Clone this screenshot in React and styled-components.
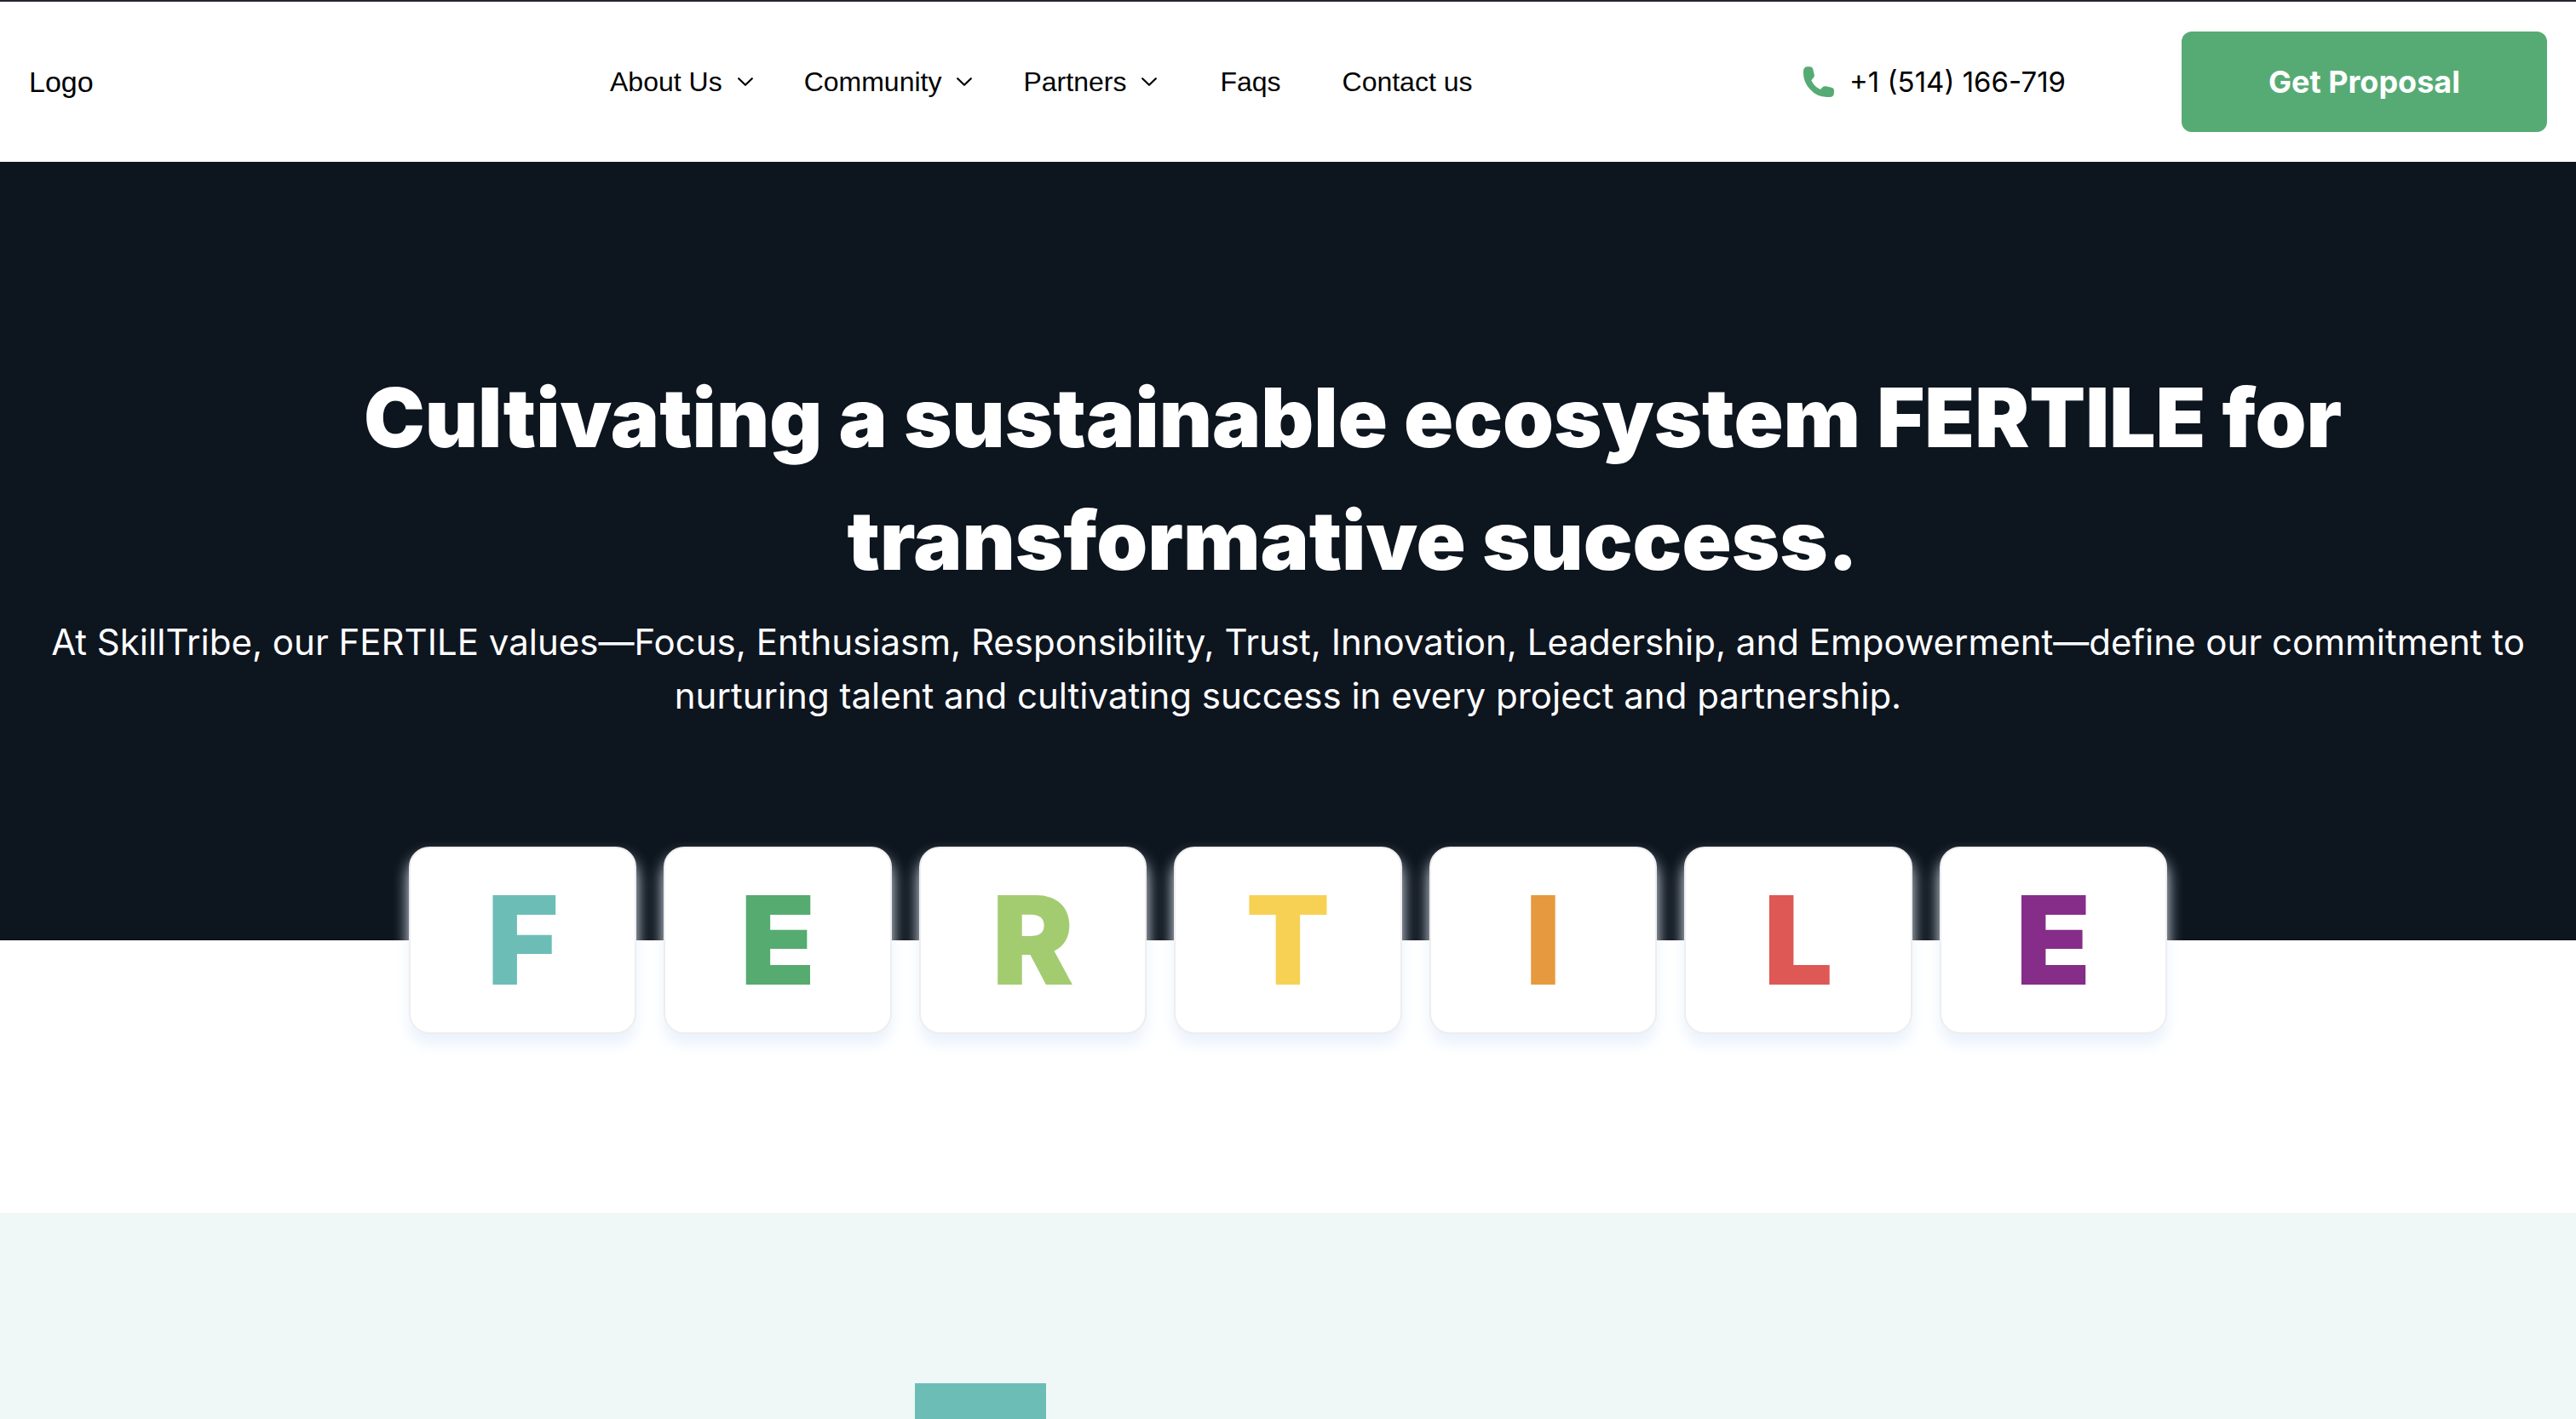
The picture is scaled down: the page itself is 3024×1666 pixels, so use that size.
import React from "react";
import styled, { createGlobalStyle } from "styled-components";

const GlobalStyle = createGlobalStyle`
  *, *::before, *::after { box-sizing: border-box; }
  body {
    margin: 0;
    background: #ffffff;
    font-family: Inter, "Liberation Sans", sans-serif;
    color: #000000;
  }
`;

const Page = styled.div`
  min-height: 100vh;
`;

const Header = styled.header`
  display: grid;
  grid-template-columns: 682px 1fr auto auto;
  align-items: center;
  padding: 35px 34px;
  border-top: 2px solid #22262c;
  background: #ffffff;
`;

const Brand = styled.a`
  font: 400 34px/40px "Liberation Sans", Arial, sans-serif;
  color: #000000;
  text-decoration: none;
`;

const Nav = styled.nav`
  display: flex;
  align-items: center;
  gap: 74px;
`;

const NavGroup = styled.div`
  display: flex;
  align-items: center;
  gap: ${(p) => p.$gap}px;
`;

const NavLink = styled.a`
  font: 400 32px/40px "Liberation Sans", Arial, sans-serif;
  color: #000000;
  text-decoration: none;
`;

const NavButton = styled.button`
  display: flex;
  align-items: center;
  gap: 18px;
  padding: 0;
  border: 0;
  background: none;
  font: 400 32px/40px "Liberation Sans", Arial, sans-serif;
  color: #000000;
`;

const Phone = styled.a`
  display: flex;
  align-items: center;
  gap: 18px;
  margin-right: 136px;
  font-size: 33px;
  line-height: 40px;
  color: #000000;
  text-decoration: none;
`;

const ProposalButton = styled.button`
  padding: 32px 102px;
  border: 0;
  border-radius: 12px;
  background: #56ab74;
  color: #ffffff;
  font: 700 36px/54px Inter, sans-serif;
`;

const Hero = styled.section`
  display: flow-root;
  padding: 228px 40px 0;
  background: #0d151f;
  color: #ffffff;
  text-align: center;
`;

const Title = styled.h1`
  margin: 0;
  padding-left: 152px;
  font-size: 96px;
  line-height: 144px;
  font-weight: 900;
`;

const Lead = styled.p`
  margin: 16px 0 0;
  font-size: 42px;
  line-height: 63px;
`;

const Cards = styled.ul`
  display: grid;
  grid-template-columns: repeat(7, 1fr);
  gap: 32px;
  max-width: 2064px;
  margin: 146px auto -110px;
  padding: 0;
  list-style: none;
`;

const Card = styled.li`
  border: 2px solid #eeeeee;
  border-radius: 24px;
  background: #ffffff;
  box-shadow: 0 12px 18px #eaf2fc;
  color: ${(p) => p.$tone};
  font-size: 144px;
  line-height: 216px;
  font-weight: 900;
`;

const Values = styled.section`
  display: flow-root;
  margin-top: 320px;
  background: #eff8f7;
`;

const ValueTile = styled.div`
  width: 154px;
  height: 42px;
  margin: 200px 0 0 1074px;
  background: #6dbdb7;
`;

const Chevron = () => (
  <svg width="18" height="10" viewBox="0 0 18 10" fill="none" aria-hidden="true">
    <path d="M1.200 1.200l7.800 7.600 7.800-7.600" stroke="#000" strokeWidth="2.2" strokeLinecap="round" strokeLinejoin="round" />
  </svg>
);

const PhoneIcon = () => (
  <svg width="36" height="36" viewBox="0 0 36 36" aria-hidden="true">
    <path
      fill="#56ab74"
      d="M0 6Q0 .2 5 .2H7.500Q10.500.2 11.200 3L12.800 9.500Q13.300 12 11.500 13.800L9.300 16.200Q12.500 23.500 20 27L22.300 24.600Q24 22.800 26.500 23.200L33 24.700Q36 25.400 36 28.300V31Q36 36 30.500 36H28Q15.500 35.700 8 27Q0 18.500 0 8Z"
    />
  </svg>
);

const menus = ["About Us", "Community", "Partners"];
const links = ["Faqs", "Contact us"];
const letters = [
  ["F", "#6dbdb7"],
  ["E", "#56ab70"],
  ["R", "#a3cc70"],
  ["T", "#f7d154"],
  ["I", "#e6993f"],
  ["L", "#de5856"],
  ["E", "#852d88"],
];

export default function App() {
  return (
    <Page>
      <GlobalStyle />
      <Header>
        <Brand href="#">Logo</Brand>
        <Nav>
          <NavGroup $gap={60}>
            {menus.map((name) => (
              <NavButton key={name} type="button">
                {name}
                <Chevron />
              </NavButton>
            ))}
          </NavGroup>
          <NavGroup $gap={72}>
            {links.map((name) => (
              <NavLink key={name} href="#">
                {name}
              </NavLink>
            ))}
          </NavGroup>
        </Nav>
        <Phone href="tel:+1514166719">
          <PhoneIcon />
          +1 (514) 166-719
        </Phone>
        <ProposalButton type="button">Get Proposal</ProposalButton>
      </Header>
      <Hero>
        <Title>Cultivating a sustainable ecosystem FERTILE for transformative success.</Title>
        <Lead>
          At SkillTribe, our FERTILE values—Focus, Enthusiasm, Responsibility, Trust, Innovation,
          Leadership, and Empowerment—define our commitment to nurturing talent and cultivating
          success in every project and partnership.
        </Lead>
        <Cards>
          {letters.map(([letter, tone], i) => (
            <Card key={i} $tone={tone}>
              {letter}
            </Card>
          ))}
        </Cards>
      </Hero>
      <Values>
        <ValueTile />
      </Values>
    </Page>
  );
}
